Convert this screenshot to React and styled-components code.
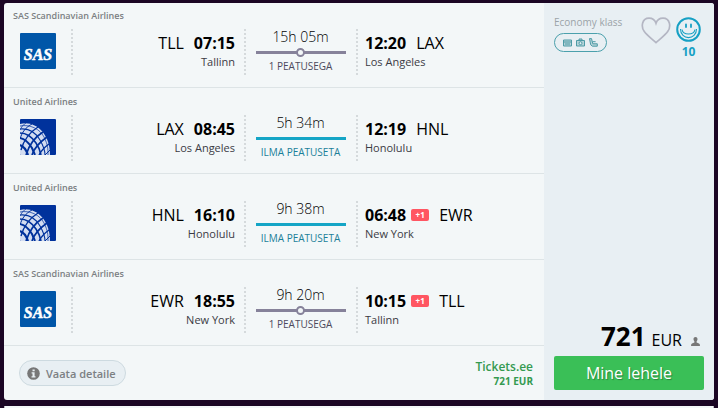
import styled, { createGlobalStyle, css } from "styled-components";

const GlobalStyle = createGlobalStyle`
  * {
    box-sizing: border-box;
  }

  body {
    margin: 0;
    background-color: #1b0624;
    color: #000;
    font-family: "Open Sans", "Noto Sans", sans-serif;
    font-size: 11px;
    overflow: hidden;
  }

  h2, p {
    margin: 0;
    font-weight: 400;
  }
`;

const ResultsStyled = styled.main`
  display: flex;
  flex-direction: column;
  gap: 6px;
  padding: 3px 4px 0;
`;

const CardStyled = styled.article`
  display: flex;
  min-height: 2px;
  border-radius: 3px;
  overflow: hidden;
  background-color: #f3f7f8;
`;

const TripStyled = styled.div`
  flex: 1;
`;

const SegmentStyled = styled.section`
  border-top: 1px solid #dde4e6;
  padding: 7px 0 11px;

  &:first-child {
    border-top: 0;
    padding-top: 6px;
  }
`;

const AirlineName = styled.h2`
  margin: 0 0 6px 9px;
  font-size: 9px;
  font-weight: 600;
  line-height: 14px;
  color: #7b7f82;
`;

const SegmentBody = styled.div`
  display: grid;
  grid-template-columns: 67px 173px 112px 1fr;
  height: 47px;
`;

const dottedLeft = css`
  background: repeating-linear-gradient(#d5dadc 0 2px, transparent 2px 4px) left
    top / 2px 100% no-repeat;
`;

const LogoCell = styled.div`
  padding: 4px 0 0 16px;

  svg {
    display: block;
    border-radius: 1px;
  }
`;

const StopCell = styled.div`
  ${dottedLeft}
  padding: 3px 9px;
  text-align: ${({ $align }) => $align};
`;

const TimeLine = styled.p`
  display: flex;
  align-items: center;
  justify-content: ${({ $end }) => ($end ? "flex-end" : "flex-start")};
  gap: 10px;
  font-size: 16px;
  font-weight: 500;
  line-height: 22px;

  time {
    font-weight: 700;
  }
`;

const TimeGroup = styled.span`
  display: flex;
  align-items: center;
  gap: 5px;
`;

const DayBadge = styled.span`
  width: 18px;
  border-radius: 2px;
  background-color: #ff5662;
  color: #fff;
  font-size: 8px;
  font-weight: 700;
  line-height: 12px;
  text-align: center;
`;

const City = styled.p`
  line-height: 16px;
  color: #3b3b44;
`;

const DurationCell = styled.div`
  ${dottedLeft}
  display: flex;
  flex-direction: column;
  align-items: center;
  padding: 0 10px 0 11px;
`;

const Duration = styled.p`
  font-size: 14px;
  font-weight: 300;
  line-height: 16px;
`;

const Track = styled.div`
  display: flex;
  align-items: center;
  justify-content: center;
  width: 90px;
  height: 9px;
  margin: 3px 0;
  background: linear-gradient(
      ${({ $direct }) => ($direct ? "#14a5c6" : "#86829a")} 0 0
    )
    center / 100% 3px no-repeat;
`;

const StopDot = styled.span`
  width: 9px;
  height: 9px;
  border: 2px solid #86829a;
  border-radius: 50%;
  background-color: #f3f7f8;
`;

const StopText = styled.p`
  font-size: 10px;
  line-height: 13px;
  color: ${({ $direct }) => ($direct ? "#1b7f98" : "#4d4a5c")};
`;

const TripFooter = styled.footer`
  display: flex;
  justify-content: space-between;
  align-items: flex-start;
  border-top: 1px solid #dde4e6;
  padding: 14px 11px 14px 15px;
`;

const DetailsButton = styled.button`
  display: flex;
  align-items: center;
  gap: 6px;
  height: 26px;
  padding: 0 9px 0 7px;
  border: 1px solid #cddae0;
  border-radius: 13px;
  background-color: #e8eff3;
  color: #7c8083;
  font: 600 11px "Open Sans", sans-serif;
`;

const Provider = styled.a`
  display: block;
  height: 26px;
  color: #349a50;
  font-size: 12px;
  font-weight: 600;
  line-height: 14px;
  text-align: right;
  text-decoration: none;

  small {
    display: block;
    font-size: 10px;
    font-weight: 700;
  }
`;

const AsideStyled = styled.aside`
  display: flex;
  flex-direction: column;
  justify-content: space-between;
  width: 170px;
  padding: 12px 10px 10px;
  background-color: #e8eff3;
`;

const AsideTop = styled.div`
  display: flex;
  justify-content: space-between;
`;

const CabinText = styled.p`
  font-size: 10px;
  line-height: 14px;
  color: #9ba3a8;
`;

const Amenities = styled.div`
  display: flex;
  align-items: center;
  justify-content: center;
  gap: 4px;
  width: 53px;
  height: 19px;
  margin-top: 4px;
  border: 1px solid #4ba0ac;
  border-radius: 10px;
`;

const Ratings = styled.div`
  display: flex;
  gap: 5px;
  padding: 2px 3px 0 0;
`;

const IconButton = styled.button`
  display: block;
  height: 27px;
  padding: 0;
  border: 0;
  background: none;
`;

const Score = styled.div`
  color: #16a0c4;
  font-size: 12px;
  font-weight: 700;
  line-height: 16px;
  text-align: center;

  svg {
    display: block;
    margin-bottom: 2px;
  }
`;

const Price = styled.p`
  display: flex;
  align-items: baseline;
  justify-content: flex-end;
  padding-right: 4px;
  font-size: 16px;
  line-height: 32px;

  strong {
    margin-right: 6px;
    font-size: 26px;
    font-weight: 700;
  }

  svg {
    margin-left: 9px;
  }
`;

const GoButton = styled.button`
  display: block;
  width: 100%;
  height: 34px;
  padding: 0;
  border: 0;
  border-radius: 2px;
  background-color: #3abf57;
  color: #fff;
  font: 500 16px "Open Sans", sans-serif;
  text-shadow: 1px 1px 1px rgba(0, 0, 0, 0.3);
`;

function SasLogo() {
  return (
    <svg width="36" height="36" viewBox="0 0 36 36" role="img" aria-label="SAS">
      <rect width="36" height="36" fill="#0056a8" />
      <text
        x="18"
        y="27"
        textAnchor="middle"
        fill="#fff"
        stroke="#fff"
        strokeWidth=".5"
        fontFamily="Liberation Serif, serif"
        fontSize="16"
        fontWeight="700"
        fontStyle="italic"
      >
        SAS
      </text>
    </svg>
  );
}

function UnitedLogo() {
  return (
    <svg width="36" height="36" viewBox="0 0 36 36" role="img" aria-label="United">
      <rect width="36" height="36" fill="#00329c" />
      <path d="M0 5C14 1 30 13 30 36H0Z" fill="#d3ddf1" />
      <g fill="none" stroke="#00329c">
        <path d="M0 7C10 5 20 10 24 18S28 30 28 36" strokeWidth=".7" />
        <path d="M0 10C9 9 16 14 20 21S25 31 25 36" strokeWidth="1.1" />
        <path d="M0 14C7 14 12 18 16 24S20 31 21 36" strokeWidth="1.6" />
        <path d="M0 19C5 20 9 24 12 29L15 36" strokeWidth="2" />
        <path d="M0 26C3 27 6 30 8 36" strokeWidth="2.2" />
        <path d="M6 4Q2 6 0 11" strokeWidth=".7" />
        <path d="M12 5C6 8 2 13 0 20" strokeWidth="1" />
        <path d="M18 8C10 13 4 20 1 31" strokeWidth="1.4" />
        <path d="M23 13C15 18 9 26 6 36" strokeWidth="1.7" />
        <path d="M27 18C20 23 14 29 12 36" strokeWidth="1.7" />
        <path d="M29 25Q22 30 19 36" strokeWidth="1.4" />
        <path d="M30 31L25 36" strokeWidth="1" />
      </g>
    </svg>
  );
}

function InfoIcon() {
  return (
    <svg width="13" height="13" viewBox="0 0 13 13" aria-hidden="true">
      <circle cx="6.5" cy="6.5" r="6.3" fill="#777" />
      <path d="M5.5 2.5h2.2v1.8H5.5zM4.6 5.3h3v4h.9v1.2h-4V9.3h1V6.5h-.9z" fill="#e8eff3" />
    </svg>
  );
}

function SmileIcon() {
  return (
    <svg width="25" height="25" viewBox="0 0 25 25" fill="none" stroke="#16a0c4" aria-hidden="true">
      <circle cx="12.5" cy="12.5" r="11.3" strokeWidth="2" />
      <path d="M4.5 12C4.5 23.5 20.5 23.5 20.5 12" strokeWidth="1.1" />
      <path d="M6 12.5C7 18.5 18 18.5 19 12.5" strokeWidth="1.1" />
      <path d="M10 7.5v2.5M15 7.5v2.5" strokeWidth="1.8" strokeLinecap="round" />
    </svg>
  );
}

function HeartIcon() {
  return (
    <svg width="30" height="27" viewBox="0 0 30 27" fill="none" stroke="#b4b6c3" strokeWidth="1.7" aria-hidden="true">
      <path d="M15 25.6C11 21.8 6.2 18.6 3.3 14.6C-.3 9.4 1 1.2 8 1.1C12 1.1 14.3 4 15 6.2C15.7 4 18 1.1 22 1.1C29 1.2 30.3 9.4 26.7 14.6C23.8 18.6 19 21.8 15 25.6Z" />
    </svg>
  );
}

function AmenityIcons() {
  return (
    <>
      <svg width="9" height="9" viewBox="0 0 9 9" fill="#b5d3d8" stroke="#4d9ba6" aria-label="Tray">
        <path d="M.5 2h8v6h-8zM.5 4h8M2 6h5" />
      </svg>
      <svg width="9" height="9" viewBox="0 0 9 9" fill="#b5d3d8" stroke="#4d9ba6" aria-label="Bag">
        <path d="M.5 2.5h8V8h-8zM3 2.5V1h3v1.5" />
        <circle cx="4.5" cy="5.2" r="1.5" fill="#e8eff3" />
      </svg>
      <svg width="9" height="9" viewBox="0 0 9 9" fill="#b5d3d8" stroke="#4d9ba6" aria-label="Seat">
        <path d="M.5.6h2l1.3 5.2h4.5v2.4H3.4L1.7 6.8zM3.6 3.7h3" />
      </svg>
    </>
  );
}

function PersonIcon() {
  return (
    <svg width="9" height="9" viewBox="0 0 9 9" fill="#777" aria-hidden="true">
      <path d="M4.5 0C6 0 6.6 1 6.5 2.3C6.4 3.4 6 4 5.6 4.5V5.5L8 6.4Q9 6.8 9 9H0Q0 6.8 1 6.4L3.4 5.5V4.5C3 4 2.6 3.4 2.5 2.3C2.4 1 3 0 4.5 0Z" />
    </svg>
  );
}

const segments = [
  {
    airline: "SAS Scandinavian Airlines",
    Logo: SasLogo,
    from: { code: "TLL", time: "07:15", city: "Tallinn" },
    duration: "15h 05m",
    direct: false,
    to: { code: "LAX", time: "12:20", city: "Los Angeles" },
  },
  {
    airline: "United Airlines",
    Logo: UnitedLogo,
    from: { code: "LAX", time: "08:45", city: "Los Angeles" },
    duration: "5h 34m",
    direct: true,
    to: { code: "HNL", time: "12:19", city: "Honolulu" },
  },
  {
    airline: "United Airlines",
    Logo: UnitedLogo,
    from: { code: "HNL", time: "16:10", city: "Honolulu" },
    duration: "9h 38m",
    direct: true,
    to: { code: "EWR", time: "06:48", city: "New York", nextDay: true },
  },
  {
    airline: "SAS Scandinavian Airlines",
    Logo: SasLogo,
    from: { code: "EWR", time: "18:55", city: "New York" },
    duration: "9h 20m",
    direct: false,
    to: { code: "TLL", time: "10:15", city: "Tallinn", nextDay: true },
  },
];

function Segment({ airline, Logo, from, to, duration, direct }) {
  return (
    <SegmentStyled>
      <AirlineName>{airline}</AirlineName>
      <SegmentBody>
        <LogoCell>
          <Logo />
        </LogoCell>
        <StopCell $align="right">
          <TimeLine $end>
            <span>{from.code}</span>
            <time>{from.time}</time>
          </TimeLine>
          <City>{from.city}</City>
        </StopCell>
        <DurationCell>
          <Duration>{duration}</Duration>
          <Track $direct={direct}>{!direct && <StopDot />}</Track>
          <StopText $direct={direct}>
            {direct ? "ILMA PEATUSETA" : "1 PEATUSEGA"}
          </StopText>
        </DurationCell>
        <StopCell $align="left">
          <TimeLine>
            <TimeGroup>
              <time>{to.time}</time>
              {to.nextDay && <DayBadge>+1</DayBadge>}
            </TimeGroup>
            <span>{to.code}</span>
          </TimeLine>
          <City>{to.city}</City>
        </StopCell>
      </SegmentBody>
    </SegmentStyled>
  );
}

function App() {
  return (
    <>
      <GlobalStyle />
      <ResultsStyled>
        <CardStyled>
          <TripStyled>
            {segments.map((segment, index) => (
              <Segment key={index} {...segment} />
            ))}
            <TripFooter>
              <DetailsButton type="button">
                <InfoIcon />
                Vaata detaile
              </DetailsButton>
              <Provider href="#tickets">
                Tickets.ee
                <small>721 EUR</small>
              </Provider>
            </TripFooter>
          </TripStyled>
          <AsideStyled>
            <AsideTop>
              <div>
                <CabinText>Economy klass</CabinText>
                <Amenities>
                  <AmenityIcons />
                </Amenities>
              </div>
              <Ratings>
                <IconButton type="button" aria-label="Lisa lemmikutesse">
                  <HeartIcon />
                </IconButton>
                <Score>
                  <SmileIcon />
                  10
                </Score>
              </Ratings>
            </AsideTop>
            <div>
              <Price>
                <strong>721</strong>
                EUR
                <PersonIcon />
              </Price>
              <GoButton type="button">Mine lehele</GoButton>
            </div>
          </AsideStyled>
        </CardStyled>
        <CardStyled />
      </ResultsStyled>
    </>
  );
}

export default App;
